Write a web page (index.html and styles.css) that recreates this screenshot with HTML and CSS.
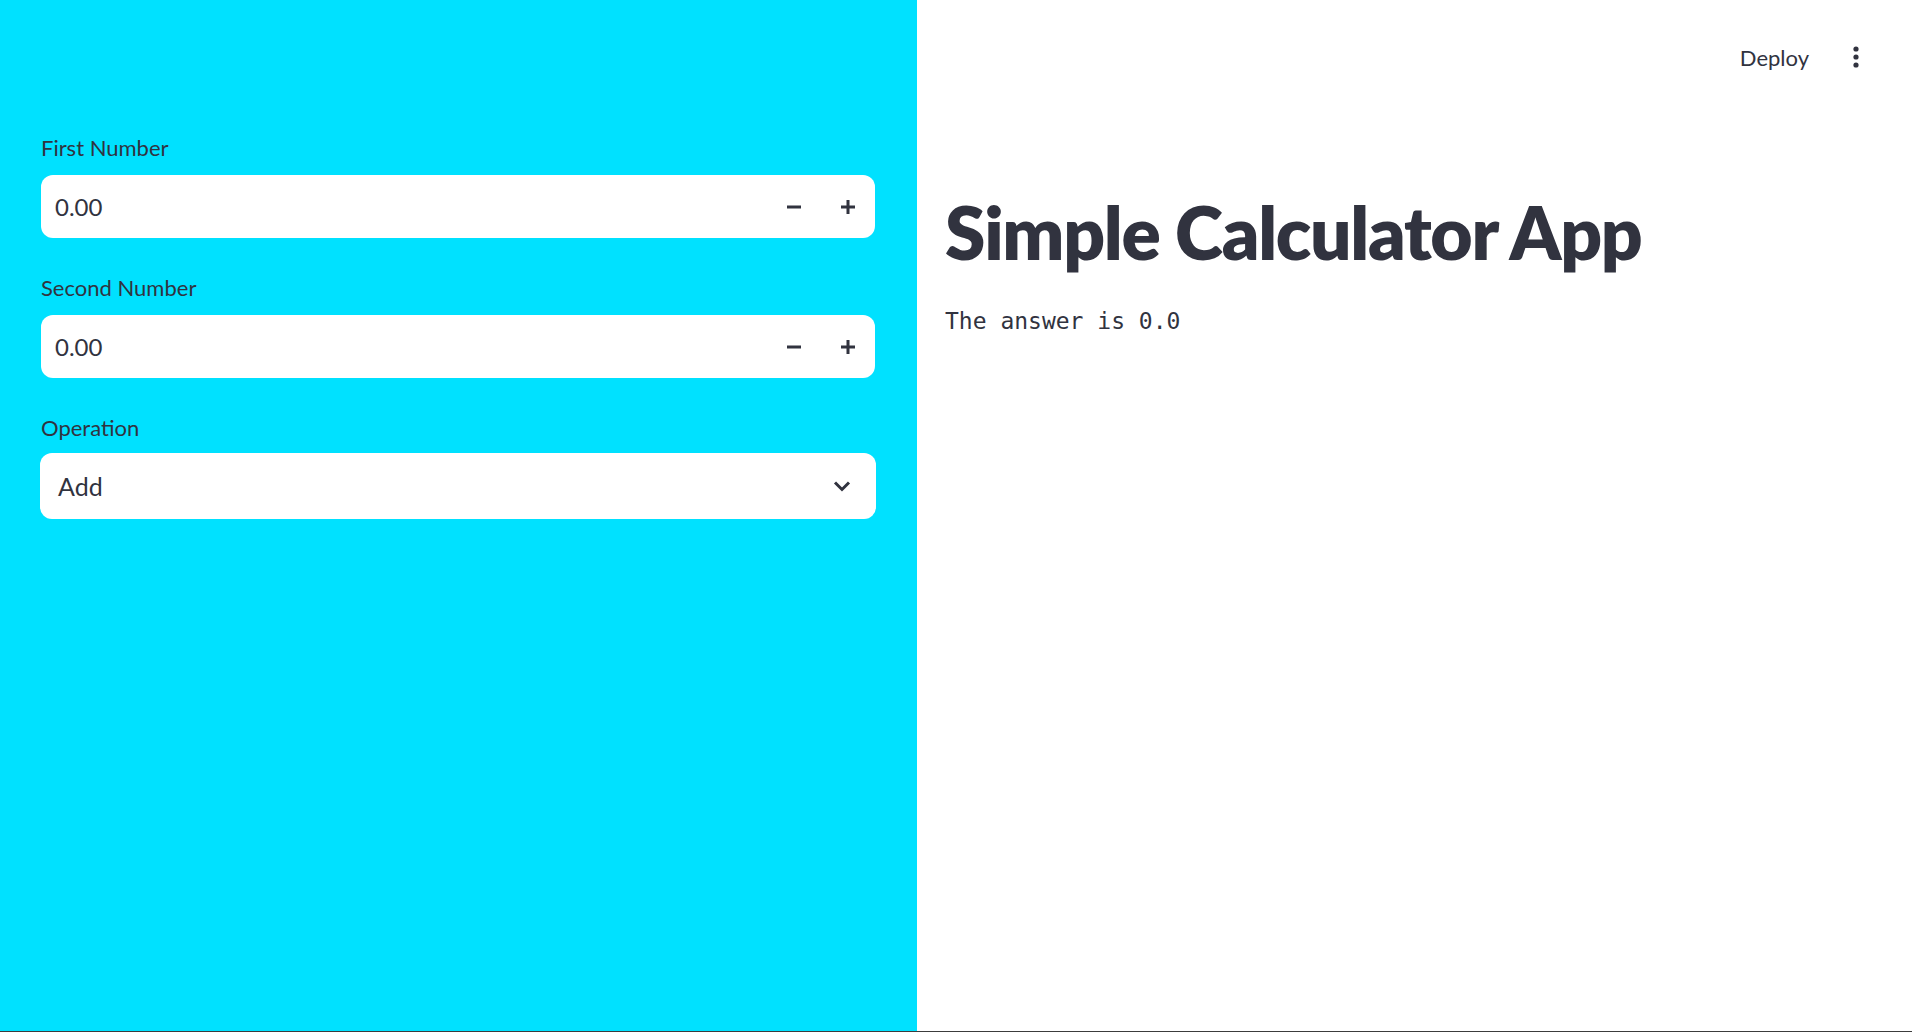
FILE: index.html
```html
<!DOCTYPE html>
<html lang="en">
<head>
<meta charset="utf-8">
<title>Simple Calculator App</title>
<link rel="stylesheet" href="styles.css">
</head>
<body>
<div class="app">
  <aside class="sidebar">
    <div class="field">
      <label class="field-label">First Number</label>
      <div class="number-input">
        <span class="value">0.00</span>
        <button class="step" aria-label="decrement">
          <svg width="14" height="14" viewBox="0 0 14 14"><rect x="0" y="5.5" width="14" height="3" fill="#31333F"/></svg>
        </button>
        <button class="step" aria-label="increment">
          <svg width="14" height="14" viewBox="0 0 14 14"><rect x="0" y="5.5" width="14" height="3" fill="#31333F"/><rect x="5.5" y="0" width="3" height="14" fill="#31333F"/></svg>
        </button>
      </div>
    </div>
    <div class="field">
      <label class="field-label">Second Number</label>
      <div class="number-input">
        <span class="value">0.00</span>
        <button class="step" aria-label="decrement">
          <svg width="14" height="14" viewBox="0 0 14 14"><rect x="0" y="5.5" width="14" height="3" fill="#31333F"/></svg>
        </button>
        <button class="step" aria-label="increment">
          <svg width="14" height="14" viewBox="0 0 14 14"><rect x="0" y="5.5" width="14" height="3" fill="#31333F"/><rect x="5.5" y="0" width="3" height="14" fill="#31333F"/></svg>
        </button>
      </div>
    </div>
    <div class="field field-select">
      <label class="field-label">Operation</label>
      <div class="select">
        <span class="value select-value">Add</span>
        <svg class="chevron" width="18" height="12" viewBox="0 0 18 12"><path d="M2 2.5 L9 9.5 L16 2.5" fill="none" stroke="#31333F" stroke-width="3"/></svg>
      </div>
    </div>
  </aside>
  <main class="main">
    <header class="toolbar">
      <span class="deploy">Deploy</span>
      <button class="kebab" aria-label="menu">
        <svg width="6" height="22" viewBox="0 0 6 22"><circle cx="3" cy="3" r="2.6" fill="#31333F"/><circle cx="3" cy="11" r="2.6" fill="#31333F"/><circle cx="3" cy="19" r="2.6" fill="#31333F"/></svg>
      </button>
    </header>
    <section class="content">
      <h1 class="title">Simple Calculator App</h1>
      <p class="answer">The answer is 0.0</p>
    </section>
  </main>
</div>
</body>
</html>
```

FILE: styles.css
```css
html, body {
  margin: 0;
  padding: 0;
}

body {
  font-family: Lato, "Noto Sans", sans-serif;
  color: #31333F;
  background: #ffffff;
}

.app {
  display: flex;
  height: 1032px;
  box-sizing: border-box;
  border-bottom: 1px solid #3c3c3c;
}

.sidebar {
  width: 917px;
  flex: 0 0 917px;
  background: #00E1FF;
  box-sizing: border-box;
  padding: 133px 42px 0 41px;
}

.field {
  display: flex;
  flex-direction: column;
  margin-bottom: 35px;
}

.field-label {
  font-size: 22px;
  line-height: 30px;
  height: 30px;
  margin-bottom: 12px;
}

.field-select .field-label {
  margin-bottom: 10px;
}

.number-input {
  display: flex;
  align-items: center;
  height: 63px;
  background: #ffffff;
  border-radius: 12px;
  padding-left: 14px;
  box-sizing: border-box;
}

.value {
  flex: 1;
  font-size: 24px;
}

.step {
  width: 54px;
  height: 63px;
  border: none;
  background: transparent;
  padding: 0;
  display: flex;
  align-items: center;
  justify-content: center;
}

.select {
  display: flex;
  align-items: center;
  height: 66px;
  background: #ffffff;
  border-radius: 12px;
  margin: 0 -1px;
  padding: 0 25px 0 18px;
  box-sizing: border-box;
}

.select-value {
  font-size: 25px;
}

.chevron {
  display: block;
}

.main {
  flex: 1;
  display: flex;
  flex-direction: column;
}

.toolbar {
  height: 114px;
  display: flex;
  align-items: center;
  justify-content: flex-end;
  padding-right: 36px;
}

.deploy {
  font-size: 22px;
  margin-right: 27px;
}

.kebab {
  width: 40px;
  height: 40px;
  border: none;
  background: transparent;
  padding: 0;
  display: flex;
  align-items: center;
  justify-content: center;
}

.content {
  padding-left: 28px;
}

.title {
  margin: 75px 0 0 0;
  font-size: 73px;
  line-height: 1.2;
  font-weight: 800;
  letter-spacing: -1.3px;
}

.answer {
  margin: 27px 0 0 0;
  font-family: "DejaVu Sans Mono", "Liberation Mono", monospace;
  font-size: 23px;
  line-height: 1.5;
}
```
